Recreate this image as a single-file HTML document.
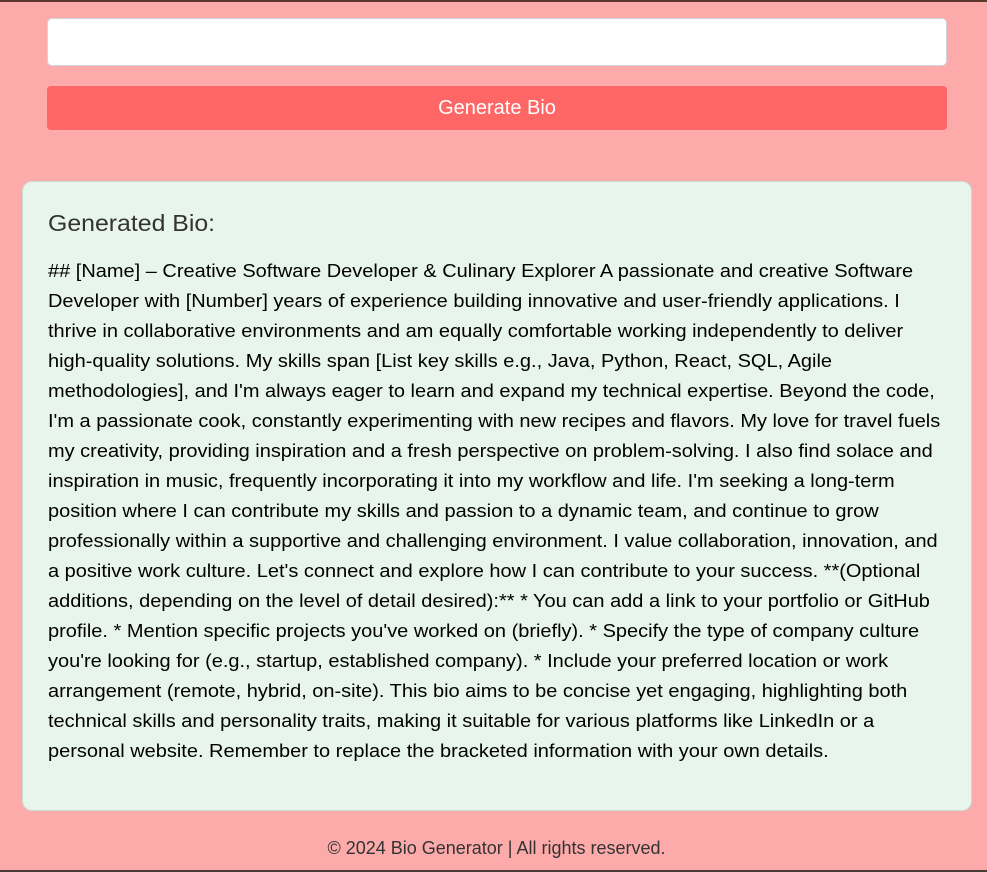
<!DOCTYPE html>
<html><head><meta charset="utf-8"><style>
html,body{margin:0;padding:0}
body{width:987px;height:872px;background:#fdaaaa;font-family:"Liberation Sans",Arial,sans-serif;position:relative;overflow:hidden}
.topbar{position:absolute;left:0;top:0;width:987px;height:2px;background:#5a3a2e}
.botbar{position:absolute;left:0;bottom:0;width:987px;height:2px;background:#4a3a36}
.input{position:absolute;left:47px;top:18px;width:898px;height:46px;background:#fff;border:1px solid #cdd6da;border-radius:5px}
.btn{position:absolute;left:47px;top:86px;width:900px;height:44px;background:#ff6666;border-radius:4px;color:#fff;font-size:20px;text-align:center;line-height:44px}
.card{position:absolute;left:22px;top:181px;width:948px;height:628px;background:#e8f5ec;border:1px solid #c9dccf;border-radius:10px}
h2{position:absolute;left:25px;top:28px;margin:0;font-weight:normal;font-size:23px;color:#333;transform:scaleX(1.08);transform-origin:left}
.txt{position:absolute;left:25px;top:74px;font-size:18px;line-height:30px;color:#000;white-space:nowrap;transform:scaleX(1.11);transform-origin:left top}
.foot{position:absolute;left:0;top:838px;width:993px;text-align:center;font-size:18px;color:#333}
</style></head><body>
<div class="topbar"></div>
<div class="input"></div>
<div class="btn">Generate Bio</div>
<div class="card"><h2>Generated Bio:</h2>
<div class="txt">## [Name] – Creative Software Developer &amp; Culinary Explorer A passionate and creative Software<br>Developer with [Number] years of experience building innovative and user-friendly applications. I<br>thrive in collaborative environments and am equally comfortable working independently to deliver<br>high-quality solutions. My skills span [List key skills e.g., Java, Python, React, SQL, Agile<br>methodologies], and I'm always eager to learn and expand my technical expertise. Beyond the code,<br>I'm a passionate cook, constantly experimenting with new recipes and flavors. My love for travel fuels<br>my creativity, providing inspiration and a fresh perspective on problem-solving. I also find solace and<br>inspiration in music, frequently incorporating it into my workflow and life. I'm seeking a long-term<br>position where I can contribute my skills and passion to a dynamic team, and continue to grow<br>professionally within a supportive and challenging environment. I value collaboration, innovation, and<br>a positive work culture. Let's connect and explore how I can contribute to your success. **(Optional<br>additions, depending on the level of detail desired):** * You can add a link to your portfolio or GitHub<br>profile. * Mention specific projects you've worked on (briefly). * Specify the type of company culture<br>you're looking for (e.g., startup, established company). * Include your preferred location or work<br>arrangement (remote, hybrid, on-site). This bio aims to be concise yet engaging, highlighting both<br>technical skills and personality traits, making it suitable for various platforms like LinkedIn or a<br>personal website. Remember to replace the bracketed information with your own details.</div>
</div>
<div class="foot">© 2024 Bio Generator | All rights reserved.</div>
<div class="botbar"></div>
</body></html>
